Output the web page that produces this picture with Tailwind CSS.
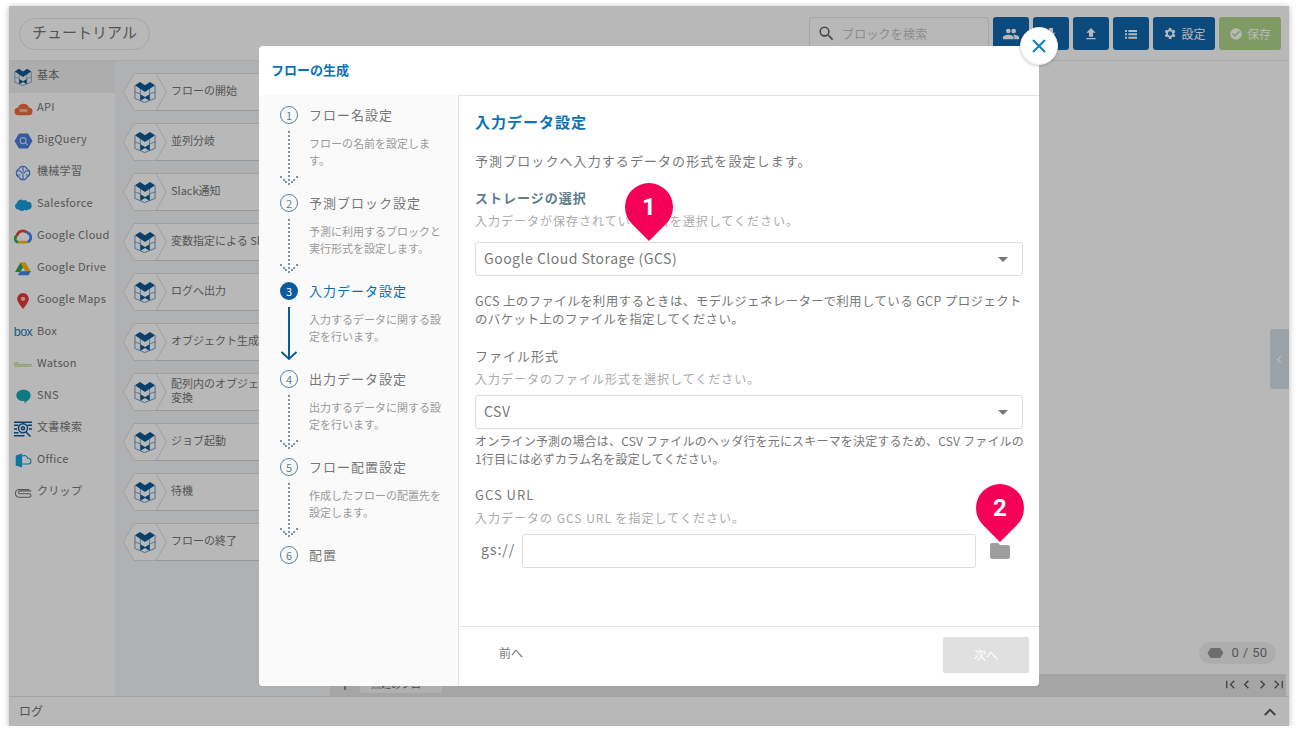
<!DOCTYPE html>
<html lang="ja">
<head>
<meta charset="UTF-8">
<title>フローの生成</title>
<script src="https://cdn.jsdelivr.net/npm/@tailwindcss/browser@4"></script>
</head>
<body class="bg-white font-['Noto_Sans_CJK_JP',sans-serif] overflow-hidden">
<svg class="hidden">
  <symbol id="block" viewBox="0 0 24 24">
    <path d="M1 5v14l10.500 4.500L23 19V5" fill="none" stroke="#3d7cb0" stroke-width=".8"/>
    <path d="M7 8v13M17 8v13M1 12l6 2M23 12l-6 2" fill="none" stroke="#3d7cb0" stroke-width=".7"/>
    <path d="M6.500 1L12 4.500 17.500 1 23 4.500 12 12 1 4.500z" fill="#0f5a94"/>
    <path d="M7 14.500l5 3 5-3v7l-5-3-5 3z" fill="#0f5a94"/>
  </symbol>
  <symbol id="hex" viewBox="0 0 44 38">
    <path d="M11 .500h22L43.500 19 33 37.500H11L.500 19z" fill="#fff" stroke="#dedede"/>
  </symbol>
  <symbol id="dots" viewBox="0 0 18 56">
    <path fill="#7d929e" d="M8 0h2v2H8zM8 4h2v2H8zM8 8h2v2H8zM8 12h2v2H8zM8 16h2v2H8zM8 20h2v2H8zM8 24h2v2H8zM8 28h2v2H8zM8 32h2v2H8zM8 36h2v2H8zM8 40h2v2H8zM8 44h2v2H8zM8 48h2v2H8zM8 52h2v2H8zM0 45h2v2H0zM3 48h2v2H3zM5 50h2v2H5zM16 45h2v2h-2zM13 48h2v2h-2zM11 50h2v2h-2z"/>
  </symbol>
</svg>

<div class="relative ml-[9px] mt-[6px] w-[1280px] h-[720px] bg-white shadow-[0_1px_6px_rgba(0,0,0,0.3)] flex flex-col overflow-hidden">

  <!-- header -->
  <header class="h-[55px] shrink-0 border-b border-[#ececec] flex items-start pt-[11px] pr-[8px] pl-[10px]">
    <div class="h-[32px] w-[131px] rounded-full border border-[#e6e6e6] flex items-center justify-center pb-[3px] text-[15px] text-[#777] mt-[1px]">チュートリアル</div>
    <div class="ml-auto w-[180px] h-[33px] border border-[#e6e6e6] rounded-[3px] flex items-center pl-[7px] gap-[6px] text-[12px] text-[#c4c4c4] tracking-[0.2px]">
      <svg class="w-[19px] h-[19px]" viewBox="0 0 24 24" fill="#666"><path d="M15.500 14h-.79l-.28-.27A6.470 6.470 0 0 0 16 9.500 6.500 6.500 0 1 0 9.500 16c1.610 0 3.090-.59 4.230-1.570l.27.28v.79l5 5L20.490 19zm-6 0a4.500 4.500 0 1 1 0-9 4.500 4.500 0 0 1 0 9z"/></svg>
      ブロックを検索
    </div>
    <div class="ml-[4px] flex gap-[4px]">
      <div class="w-[36px] h-[33px] rounded-[3px] bg-[#0f67ac] flex items-center justify-center">
        <svg class="w-[16px] h-[16px]" viewBox="0 0 24 24" fill="#fff"><path d="M16 11a3.500 3.500 0 1 0 0-7 3.500 3.500 0 0 0 0 7zm-8 0a3.500 3.500 0 1 0 0-7 3.500 3.500 0 0 0 0 7zm0 2c-2.600 0-8 1.300-8 4v3h16v-3c0-2.700-5.400-4-8-4zm8 0h-1c1.200.9 2 2.100 2 4v3h7v-3c0-2.700-5.400-4-8-4z"/></svg>
      </div>
      <div class="w-[36px] h-[33px] rounded-[3px] bg-[#0f67ac] flex items-center justify-center">
        <svg class="w-[16px] h-[16px]" viewBox="0 0 24 24" fill="#fff"><path d="M9 3h6v7h4l-7 7-7-7h4zM5 18h14v2H5z"/></svg>
      </div>
      <div class="w-[36px] h-[33px] rounded-[3px] bg-[#0f67ac] flex items-center justify-center">
        <svg class="w-[16px] h-[16px]" viewBox="0 0 24 24" fill="#fff"><path d="M9 16h6v-6h4l-7-7-7 7h4zM5 18h14v2H5z"/></svg>
      </div>
      <div class="w-[36px] h-[33px] rounded-[3px] bg-[#0f67ac] flex items-center justify-center">
        <svg class="w-[16px] h-[16px]" viewBox="0 0 24 24" fill="#fff"><path d="M3 6h3v3H3zM8 6h13v3H8zM3 11h3v3H3zM8 11h13v3H8zM3 16h3v3H3zM8 16h13v3H8z"/></svg>
      </div>
      <div class="w-[62px] h-[33px] rounded-[3px] bg-[#0f67ac] flex items-center justify-center gap-[4px] text-white text-[12px]">
        <svg class="w-[15px] h-[15px]" viewBox="0 0 24 24" fill="#fff"><path d="M19.400 13a7.500 7.500 0 0 0 0-2l2.100-1.600-2-3.500-2.500 1a7.500 7.500 0 0 0-1.700-1L15 3.300h-4l-.4 2.600a7.500 7.500 0 0 0-1.700 1l-2.500-1-2 3.500L6.500 11a7.500 7.500 0 0 0 0 2l-2.100 1.600 2 3.500 2.500-1a7.500 7.500 0 0 0 1.700 1l.4 2.600h4l.4-2.600a7.500 7.500 0 0 0 1.700-1l2.500 1 2-3.500zM13 15.500a3.500 3.500 0 1 1 0-7 3.500 3.500 0 0 1 0 7z"/></svg>
        設定
      </div>
      <div class="w-[62px] h-[33px] rounded-[3px] bg-[#b1d689] flex items-center justify-center gap-[4px] text-white text-[12px]">
        <svg class="w-[14px] h-[14px]" viewBox="0 0 24 24" fill="#fff"><path d="M12 2a10 10 0 1 0 0 20 10 10 0 0 0 0-20zm-2 15l-5-5 1.700-1.700 3.300 3.300 7.300-7.300L19 8z"/></svg>
        保存
      </div>
    </div>
  </header>

  <!-- body -->
  <div class="flex-1 flex min-h-0">
    <!-- categories -->
    <nav class="w-[106px] shrink-0 text-[11px] text-[#777] tracking-[0.3px]">
      <div class="h-[32px] bg-[#f0f0f0] flex items-center"><span class="w-[28px] flex justify-center pb-[1px]"><svg class="w-[18px] h-[18px]" viewBox="0 0 24 24"><use href="#block"/></svg></span><span class="-mt-[6px]">基本</span></div>
      <div class="h-[32px] flex items-center"><span class="w-[28px] flex justify-center pb-[1px]">
        <svg class="w-[19px] h-[14px]" viewBox="0 0 24 18"><path d="M6 17a5 5 0 0 1-1-10 7.500 7.500 0 0 1 14 0 5 5 0 0 1-1 10z" fill="#ef6c3e"/><rect x="7" y="9" width="10" height="4" fill="#f8b9a2"/></svg></span><span class="-mt-[6px]">API</span></div>
      <div class="h-[32px] flex items-center"><span class="w-[28px] flex justify-center pb-[1px]">
        <svg class="w-[19px] h-[18px]" viewBox="0 0 24 24"><path d="M6 2h12l6 10-6 10H6L0 12z" fill="#4a7fe0"/><circle cx="11.500" cy="11.500" r="4" fill="none" stroke="#c8d9f7" stroke-width="1.500"/><path d="M14.500 14.500l3 3" stroke="#c8d9f7" stroke-width="1.500"/></svg></span><span class="-mt-[6px]">BigQuery</span></div>
      <div class="h-[32px] flex items-center"><span class="w-[28px] flex justify-center pb-[1px]">
        <svg class="w-[16px] h-[16px]" viewBox="0 0 24 24" fill="none" stroke="#4a85e6" stroke-width="1.800"><path d="M12 2c-3 0-5 1-6 4-3 1-4 3-4 6s1 5 4 6c1 3 3 4 6 4s5-1 6-4c3-1 4-3 4-6s-1-5-4-6c-1-3-3-4-6-4z"/><path d="M2 9h6l2 3h4l2-3h6M2 15h6M16 15h6M12 2v8M12 14v8"/></svg></span><span class="-mt-[6px]">機械学習</span></div>
      <div class="h-[32px] flex items-center"><span class="w-[28px] flex justify-center pb-[1px]">
        <svg class="w-[18px] h-[13px]" viewBox="0 0 24 17"><path d="M5 15a4.500 4.500 0 0 1-1-8.500A5 5 0 0 1 12 3a4.500 4.500 0 0 1 6 2 5 5 0 0 1 1 10 4 4 0 0 1-5 0.500 4.500 4.500 0 0 1-7 0z" fill="#1d9bd8"/></svg></span><span class="-mt-[6px]">Salesforce</span></div>
      <div class="h-[32px] flex items-center"><span class="w-[28px] flex justify-center pb-[1px]">
        <svg class="w-[18px] h-[15px]" viewBox="0 0 24 19" fill="none" stroke-width="3.600"><path d="M6 17a4.500 4.500 0 0 1-2-8.500" stroke="#34a853"/><path d="M6 17h12" stroke="#fbbc05"/><path d="M4 8.500A8 8 0 0 1 17 4" stroke="#ea4335"/><path d="M17 4a7 7 0 0 1 3 12l-2 1" stroke="#4285f4"/></svg></span><span class="-mt-[6px]">Google Cloud</span></div>
      <div class="h-[32px] flex items-center"><span class="w-[28px] flex justify-center pb-[1px]">
        <svg class="w-[16px] h-[14px]" viewBox="0 0 24 21"><path d="M8 1h8L8 15H0z" fill="#34a853"/><path d="M16 1l8 14h-8L8 1z" fill="#fbbc05"/><path d="M4 20l4-6h16l-4 6z" fill="#4285f4"/></svg></span><span class="-mt-[6px]">Google Drive</span></div>
      <div class="h-[32px] flex items-center"><span class="w-[28px] flex justify-center pb-[1px]">
        <svg class="w-[12px] h-[16px]" viewBox="0 0 16 22"><path d="M8 0a8 8 0 0 0-8 8c0 5 8 14 8 14s8-9 8-14a8 8 0 0 0-8-8z" fill="#e53935"/><circle cx="8" cy="8" r="3" fill="#fff" fill-opacity=".7"/></svg></span><span class="-mt-[6px]">Google Maps</span></div>
      <div class="h-[32px] flex items-center"><span class="w-[28px] text-center font-['Liberation_Sans'] text-[12.500px] tracking-[-0.6px] text-[#1f7dc4] pb-[2px]">box</span><span class="-mt-[6px]">Box</span></div>
      <div class="h-[32px] flex items-center"><span class="w-[28px] text-center text-[5.500px] tracking-[-0.2px] text-[#9ccc3c]">Watson</span><span class="-mt-[6px]">Watson</span></div>
      <div class="h-[32px] flex items-center"><span class="w-[28px] flex justify-center pb-[1px]">
        <svg class="w-[15px] h-[15px]" viewBox="0 0 20 20"><path d="M10 1c5.500 0 9.500 3 9.500 7.500S15.500 16 14 16c-.500 2-2 3-3 3.500.500-1 .500-2 .500-3.500H10C4.500 16 .500 13 .500 8.500S4.500 1 10 1z" fill="#14a9b8"/></svg></span><span class="-mt-[6px]">SNS</span></div>
      <div class="h-[32px] flex items-center"><span class="w-[28px] flex justify-center pb-[1px]">
        <svg class="w-[18px] h-[18px]" viewBox="0 0 24 24" fill="none" stroke="#0f5a94" stroke-width="2"><path d="M0 3h24M0 7h6M18 7h6M0 12h4M20 12h4M0 17h6M0 21h14"/><circle cx="12" cy="11" r="6"/><circle cx="12" cy="11" r="2"/><path d="M16 16l6 6"/></svg></span><span class="-mt-[6px]">文書検索</span></div>
      <div class="h-[32px] flex items-center"><span class="w-[28px] flex justify-center pb-[1px]">
        <svg class="w-[17px] h-[15px]" viewBox="0 0 24 20"><path d="M1 3l9-3v20l-9-3z" fill="#12a3dc"/><path d="M10 4a5 5 0 0 1 8 3 4 4 0 0 1 1 8h-9" fill="none" stroke="#12a3dc" stroke-width="1.500"/></svg></span><span class="-mt-[6px]">Office</span></div>
      <div class="h-[32px] flex items-center"><span class="w-[28px] flex justify-center pb-[1px]">
        <svg class="w-[17px] h-[10px]" viewBox="0 0 24 14" fill="none" stroke="#777" stroke-width="1.500"><path d="M23 4H7a2 2 0 0 0 0 4h13a2.500 2.500 0 0 1 0 5H6a5.500 5.500 0 0 1 0-11h14"/></svg></span><span class="-mt-[6px]">クリップ</span></div>
    </nav>

    <!-- blocks -->
    <section class="w-[215px] shrink-0 bg-[#f4f6f7] pt-[12px] pl-[8px] pr-[8px] flex flex-col gap-[12px] text-[11px] leading-[14px] text-[#777]">
      <div class="flex h-[38px] relative">
        <svg class="w-[44px] h-[38px] shrink-0 relative z-10"><use href="#hex"/></svg>
        <svg class="absolute z-10 left-[11px] top-[8px] w-[22px] h-[22px]" viewBox="0 0 24 24"><use href="#block"/></svg>
        <div class="flex-1 -ml-[22px] pl-[26px] pb-[4px] bg-white border border-l-0 border-[#dedede] border-b-[#d2d2d2] flex items-center">フローの開始</div>
      </div>
      <div class="flex h-[38px] relative">
        <svg class="w-[44px] h-[38px] shrink-0 relative z-10"><use href="#hex"/></svg>
        <svg class="absolute z-10 left-[11px] top-[8px] w-[22px] h-[22px]" viewBox="0 0 24 24"><use href="#block"/></svg>
        <div class="flex-1 -ml-[22px] pl-[26px] pb-[4px] bg-white border border-l-0 border-[#dedede] border-b-[#d2d2d2] flex items-center">並列分岐</div>
      </div>
      <div class="flex h-[38px] relative">
        <svg class="w-[44px] h-[38px] shrink-0 relative z-10"><use href="#hex"/></svg>
        <svg class="absolute z-10 left-[11px] top-[8px] w-[22px] h-[22px]" viewBox="0 0 24 24"><use href="#block"/></svg>
        <div class="flex-1 -ml-[22px] pl-[26px] pb-[4px] bg-white border border-l-0 border-[#dedede] border-b-[#d2d2d2] flex items-center">Slack通知</div>
      </div>
      <div class="flex h-[38px] relative">
        <svg class="w-[44px] h-[38px] shrink-0 relative z-10"><use href="#hex"/></svg>
        <svg class="absolute z-10 left-[11px] top-[8px] w-[22px] h-[22px]" viewBox="0 0 24 24"><use href="#block"/></svg>
        <div class="flex-1 -ml-[22px] pl-[26px] pb-[4px] bg-white border border-l-0 border-[#dedede] border-b-[#d2d2d2] flex items-center whitespace-nowrap overflow-hidden">変数指定による Slack通知</div>
      </div>
      <div class="flex h-[38px] relative">
        <svg class="w-[44px] h-[38px] shrink-0 relative z-10"><use href="#hex"/></svg>
        <svg class="absolute z-10 left-[11px] top-[8px] w-[22px] h-[22px]" viewBox="0 0 24 24"><use href="#block"/></svg>
        <div class="flex-1 -ml-[22px] pl-[26px] pb-[4px] bg-white border border-l-0 border-[#dedede] border-b-[#d2d2d2] flex items-center">ログへ出力</div>
      </div>
      <div class="flex h-[38px] relative">
        <svg class="w-[44px] h-[38px] shrink-0 relative z-10"><use href="#hex"/></svg>
        <svg class="absolute z-10 left-[11px] top-[8px] w-[22px] h-[22px]" viewBox="0 0 24 24"><use href="#block"/></svg>
        <div class="flex-1 -ml-[22px] pl-[26px] pb-[4px] bg-white border border-l-0 border-[#dedede] border-b-[#d2d2d2] flex items-center whitespace-nowrap overflow-hidden">オブジェクト生成</div>
      </div>
      <div class="flex h-[38px] relative">
        <svg class="w-[44px] h-[38px] shrink-0 relative z-10"><use href="#hex"/></svg>
        <svg class="absolute z-10 left-[11px] top-[8px] w-[22px] h-[22px]" viewBox="0 0 24 24"><use href="#block"/></svg>
        <div class="flex-1 -ml-[22px] pl-[26px] pb-[4px] bg-white border border-l-0 border-[#dedede] border-b-[#d2d2d2] flex items-center">配列内のオブジェクト<br>変換</div>
      </div>
      <div class="flex h-[38px] relative">
        <svg class="w-[44px] h-[38px] shrink-0 relative z-10"><use href="#hex"/></svg>
        <svg class="absolute z-10 left-[11px] top-[8px] w-[22px] h-[22px]" viewBox="0 0 24 24"><use href="#block"/></svg>
        <div class="flex-1 -ml-[22px] pl-[26px] pb-[4px] bg-white border border-l-0 border-[#dedede] border-b-[#d2d2d2] flex items-center">ジョブ起動</div>
      </div>
      <div class="flex h-[38px] relative">
        <svg class="w-[44px] h-[38px] shrink-0 relative z-10"><use href="#hex"/></svg>
        <svg class="absolute z-10 left-[11px] top-[8px] w-[22px] h-[22px]" viewBox="0 0 24 24"><use href="#block"/></svg>
        <div class="flex-1 -ml-[22px] pl-[26px] pb-[4px] bg-white border border-l-0 border-[#dedede] border-b-[#d2d2d2] flex items-center">待機</div>
      </div>
      <div class="flex h-[38px] relative">
        <svg class="w-[44px] h-[38px] shrink-0 relative z-10"><use href="#hex"/></svg>
        <svg class="absolute z-10 left-[11px] top-[8px] w-[22px] h-[22px]" viewBox="0 0 24 24"><use href="#block"/></svg>
        <div class="flex-1 -ml-[22px] pl-[26px] pb-[4px] bg-white border border-l-0 border-[#dedede] border-b-[#d2d2d2] flex items-center">フローの終了</div>
      </div>
    </section>

    <!-- canvas -->
    <main class="flex-1 flex flex-col relative">
      <div class="flex-1 flex items-end justify-end pr-[13px] pb-[10px]">
        <div class="w-[77px] h-[22px] rounded-full bg-[#f0f0f0] flex items-center justify-center gap-[8px] font-['Roboto'] text-[13px] text-[#777] tracking-[0.4px]">
          <span class="w-[16px] h-[10px] bg-[#999] [clip-path:polygon(20%_0,80%_0,100%_50%,80%_100%,20%_100%,0_50%)]"></span>0 / 50
        </div>
      </div>
      <div class="h-[22px] bg-[#e5e5e5] mr-[3px] flex items-start text-[#666]">
        <span class="ml-[8px] text-[18px] leading-[20px] w-[14px] text-center">+</span>
        <span class="ml-[8px] w-[82px] pl-[11px] h-[19px] bg-[#f4f4f4] text-[10px] flex items-center rounded-b-[3px]">無題のフロー</span>
        <div class="ml-auto mt-[3px] flex gap-[1px]">
          <svg class="w-[15px] h-[15px]" viewBox="0 0 24 24" fill="none" stroke="#555" stroke-width="2"><path d="M6 6v12M18 6l-6 6 6 6"/></svg>
          <svg class="w-[15px] h-[15px]" viewBox="0 0 24 24" fill="none" stroke="#555" stroke-width="2"><path d="M15 6l-6 6 6 6"/></svg>
          <svg class="w-[15px] h-[15px]" viewBox="0 0 24 24" fill="none" stroke="#555" stroke-width="2"><path d="M9 6l6 6-6 6"/></svg>
          <svg class="w-[15px] h-[15px]" viewBox="0 0 24 24" fill="none" stroke="#555" stroke-width="2"><path d="M18 6v12M6 6l6 6-6 6"/></svg>
        </div>
      </div>
      <div class="absolute right-0 top-[268px] w-[19px] h-[60px] bg-[#d7e2eb] flex items-center justify-center rounded-l-[3px]">
        <svg class="w-[11px] h-[11px]" viewBox="0 0 24 24" fill="none" stroke="#fff" stroke-width="3"><path d="M15 5l-7 7 7 7"/></svg>
      </div>
    </main>
  </div>

  <!-- log bar -->
  <footer class="h-[30px] shrink-0 border-t border-[#e2e2e2] flex items-center justify-between pl-[10px] pr-[10px] text-[12px] text-[#777]">
    <span class="-mt-[2px]">ログ</span>
    <svg class="w-[18px] h-[18px]" viewBox="0 0 24 24" fill="none" stroke="#555" stroke-width="2.500"><path d="M5 16l7-7 7 7"/></svg>
  </footer>

  <!-- dim -->
  <div class="absolute inset-0 z-20 bg-black/28"></div>

  <!-- dialog -->
  <div class="absolute z-30 left-[250px] top-[40px] w-[780px] h-[640px] bg-white rounded-[4px] flex flex-col">
    <div class="h-[50px] shrink-0 border-b border-[#e4e4e4] flex items-center pl-[12px] pb-[2px] text-[13px] font-bold text-[#0a72b5] -mb-px">フローの生成</div>
    <div class="flex-1 flex min-h-0">
      <!-- steps -->
      <aside class="w-[200px] shrink-0 bg-[#fafafa] border-r border-[#e4e4e4] rounded-bl-[4px] pt-[11px] pl-[21px] text-[#777]">
        <div class="h-[88px] flex">
          <div class="w-[18px] flex flex-col items-center">
            <span class="w-[18px] h-[18px] rounded-full border border-[#5d7f93] flex items-center justify-center text-[11px] text-[#5d7f93] shrink-0">1</span>
            <svg class="w-[18px] h-[56px] mt-[7px]"><use href="#dots"/></svg>
          </div>
          <div class="ml-[11px]">
            <div class="text-[13px] leading-[18px] tracking-[1px]">フロー名設定</div>
            <p class="mt-[11px] w-[128px] text-[11px] leading-[17px] text-[#999]">フローの名前を設定します。</p>
          </div>
        </div>
        <div class="h-[88px] flex">
          <div class="w-[18px] flex flex-col items-center">
            <span class="w-[18px] h-[18px] rounded-full border border-[#5d7f93] flex items-center justify-center text-[11px] text-[#5d7f93] shrink-0">2</span>
            <svg class="w-[18px] h-[56px] mt-[7px]"><use href="#dots"/></svg>
          </div>
          <div class="ml-[11px]">
            <div class="text-[13px] leading-[18px] tracking-[1px]">予測ブロック設定</div>
            <p class="mt-[11px] w-[136px] text-[11px] leading-[17px] text-[#999]">予測に利用するブロックと実行形式を設定します。</p>
          </div>
        </div>
        <div class="h-[88px] flex">
          <div class="w-[18px] flex flex-col items-center">
            <span class="w-[18px] h-[18px] rounded-full bg-[#0a5a9c] flex items-center justify-center text-[11px] text-white shrink-0">3</span>
            <svg class="w-[18px] h-[54px] mt-[7px]" viewBox="0 0 18 54" fill="none" stroke="#0a5a9c" stroke-width="2"><path d="M9 0v52M1.500 45L9 52l7.500-7"/></svg>
          </div>
          <div class="ml-[11px]">
            <div class="text-[13px] leading-[18px] tracking-[1px] text-[#0a6cb0]">入力データ設定</div>
            <p class="mt-[11px] w-[136px] text-[11px] leading-[17px] text-[#999]">入力するデータに関する設定を行います。</p>
          </div>
        </div>
        <div class="h-[88px] flex">
          <div class="w-[18px] flex flex-col items-center">
            <span class="w-[18px] h-[18px] rounded-full border border-[#5d7f93] flex items-center justify-center text-[11px] text-[#5d7f93] shrink-0">4</span>
            <svg class="w-[18px] h-[56px] mt-[7px]"><use href="#dots"/></svg>
          </div>
          <div class="ml-[11px]">
            <div class="text-[13px] leading-[18px] tracking-[1px]">出力データ設定</div>
            <p class="mt-[11px] w-[136px] text-[11px] leading-[17px] text-[#999]">出力するデータに関する設定を行います。</p>
          </div>
        </div>
        <div class="h-[88px] flex">
          <div class="w-[18px] flex flex-col items-center">
            <span class="w-[18px] h-[18px] rounded-full border border-[#5d7f93] flex items-center justify-center text-[11px] text-[#5d7f93] shrink-0">5</span>
            <svg class="w-[18px] h-[56px] mt-[7px]"><use href="#dots"/></svg>
          </div>
          <div class="ml-[11px]">
            <div class="text-[13px] leading-[18px] tracking-[1px]">フロー配置設定</div>
            <p class="mt-[11px] w-[136px] text-[11px] leading-[17px] text-[#999]">作成したフローの配置先を設定します。</p>
          </div>
        </div>
        <div class="flex">
          <div class="w-[18px] flex flex-col items-center">
            <span class="w-[18px] h-[18px] rounded-full border border-[#5d7f93] flex items-center justify-center text-[11px] text-[#5d7f93] shrink-0">6</span>
          </div>
          <div class="ml-[11px] text-[13px] leading-[18px] tracking-[1px]">配置</div>
        </div>
      </aside>

      <!-- form -->
      <div class="flex-1 flex flex-col min-w-0">
        <div class="flex-1 pl-[16px] pr-[16px] pt-[16px] text-[#777]">
          <h2 class="text-[15px] leading-[22px] font-bold text-[#0a72b5] tracking-[1px]">入力データ設定</h2>
          <p class="mt-[18px] text-[13px] leading-[20px] tracking-[1.08px]">予測ブロックへ入力するデータの形式を設定します。</p>
          <h3 class="mt-[17px] text-[13px] leading-[20px] font-bold text-[#5f7d8c] tracking-[1px]">ストレージの選択</h3>
          <p class="mt-[3px] text-[12px] leading-[20px] text-[#aaa] tracking-[1px]">入力データが保存されている場所を選択してください。</p>
          <div class="mt-[11px] h-[34px] w-[548px] border border-[#ddd] rounded-[3px] flex items-center justify-between pl-[8px] pr-[14px] text-[14px] text-[#777] tracking-[0.5px]">
            <span class="pb-[2px]">Google Cloud Storage (GCS)</span>
            <span class="w-0 h-0 border-x-[5px] border-x-transparent border-t-[5px] border-t-[#777]"></span>
          </div>
          <p class="mt-[16px] w-[548px] text-[12.500px] leading-[18px] tracking-[0.35px] whitespace-nowrap">GCS 上のファイルを利用するときは、モデルジェネレーターで利用している GCP プロジェクト<br>のバケット上のファイルを指定してください。</p>
          <h3 class="mt-[18px] text-[13px] leading-[20px] tracking-[1px]">ファイル形式</h3>
          <p class="mt-[3px] text-[12px] leading-[20px] text-[#aaa] tracking-[1px]">入力データのファイル形式を選択してください。</p>
          <div class="mt-[6px] h-[34px] w-[548px] border border-[#ddd] rounded-[3px] flex items-center justify-between pl-[8px] pr-[14px] text-[14px] text-[#777] tracking-[0.5px]">
            <span class="pb-[2px]">CSV</span>
            <span class="w-0 h-0 border-x-[5px] border-x-transparent border-t-[5px] border-t-[#777]"></span>
          </div>
          <p class="mt-[3px] w-[548px] text-[12px] leading-[18px] tracking-[0.18px] whitespace-nowrap">オンライン予測の場合は、CSV ファイルのヘッダ行を元にスキーマを決定するため、CSV ファイルの<br>1行目には必ずカラム名を設定してください。</p>
          <h3 class="mt-[17px] text-[13px] leading-[20px] tracking-[1px]">GCS URL</h3>
          <p class="mt-[3px] text-[12px] leading-[20px] text-[#aaa] tracking-[1px]">入力データの GCS URL を指定してください。</p>
          <div class="mt-[6px] flex items-center w-[548px]">
            <span class="ml-[6px] w-[41px] pb-[3px] text-[14px] tracking-[1px]">gs://</span>
            <span class="w-[454px] h-[34px] border border-[#ddd] rounded-[3px]"></span>
            <svg class="ml-[12px] w-[24px] h-[24px]" viewBox="0 0 24 24" fill="#9e9e9e"><path d="M10 4H4a2 2 0 0 0-2 2v12a2 2 0 0 0 2 2h16a2 2 0 0 0 2-2V8a2 2 0 0 0-2-2h-8z"/></svg>
          </div>
        </div>
        <div class="h-[60px] shrink-0 border-t border-[#e4e4e4] flex items-start justify-between pl-[40px] pr-[10px] pt-[10px]">
          <span class="text-[12px] text-[#777] mt-[7px]">前へ</span>
          <span class="w-[86px] h-[36px] bg-[#e0e0e0] rounded-[2px] flex items-center justify-center text-[12px] text-white">次へ</span>
        </div>
      </div>
    </div>
    <!-- close -->
    <div class="absolute -right-[19px] -top-[19px] w-[38px] h-[38px] rounded-full bg-white border border-[#eee] shadow-[0_1px_3px_rgba(0,0,0,0.2)] flex items-center justify-center">
      <svg class="w-[16px] h-[16px]" viewBox="0 0 16 16" stroke="#0a80c8" stroke-width="2" fill="none"><path d="M2 2l12 12M14 2L2 14"/></svg>
    </div>
  </div>

  <!-- numbered pins -->
  <div class="absolute z-40 left-[616px] top-[177px] w-[48px] h-[58px]">
    <svg class="w-[48px] h-[58px]" viewBox="0 0 48 58"><path d="M24 58L7 41a24 24 0 1 1 34 0z" fill="#f50057"/></svg>
    <span class="absolute inset-x-0 top-[10px] text-center font-['Roboto'] text-[24px] leading-[28px] font-bold text-white">1</span>
  </div>
  <div class="absolute z-40 left-[967px] top-[478px] w-[48px] h-[58px]">
    <svg class="w-[48px] h-[58px]" viewBox="0 0 48 58"><path d="M24 58L7 41a24 24 0 1 1 34 0z" fill="#f50057"/></svg>
    <span class="absolute inset-x-0 top-[10px] text-center font-['Roboto'] text-[24px] leading-[28px] font-bold text-white">2</span>
  </div>
</div>
</body>
</html>
